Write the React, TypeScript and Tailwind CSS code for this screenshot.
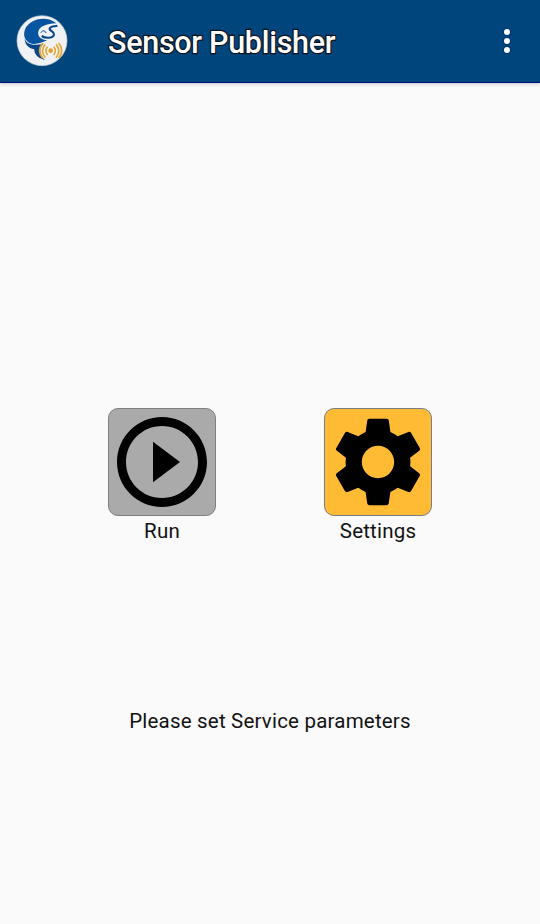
import React from "react";

function Logo() {
  return (
    <svg viewBox="0 0 192 192" className="ml-[10px] h-16 w-16 shrink-0">
      <circle cx="96" cy="95" r="75" fill="#f0f1f4" stroke="#c3ced9" strokeWidth="2" />
      <path d="M139 43C110 19 66 29 48 55C36 77 44 99 65 104C80 107 96 101 112 94C92 91 82 82 85 68C88 53 108 44 139 43Z" fill="#0754a0" />
      <path d="M44 88C48 106 67 112 101 104C86 117 87 137 105 153C80 147 72 133 73 121C54 118 44 105 44 88Z" fill="#06458b" />
      <path d="M142 50C134 53 118 51 119 60C120 67 133 67 132 77C130 88 107 89 95 81" fill="none" stroke="#06458b" strokeWidth="6.5" />
      <path d="M93 71C97 63 106 64 108 72" fill="none" stroke="#06458b" strokeWidth="3" />
      <circle cx="122" cy="125" r="7" fill="#e3a02b" />
      <g fill="none" stroke="#e5a735" strokeWidth="5">
        <path d="M113 113Q103 125 113 138M131 113Q141 125 131 138" />
        <path d="M106 106Q89 125 106 146M138 106Q155 125 138 146" />
        <path d="M98 102Q80 125 98 148M146 102Q164 125 146 148" />
      </g>
    </svg>
  );
}

function ActionButton({ label, color, children }: { label: string; color: string; children: React.ReactNode }) {
  return (
    <div className="flex w-[108px] flex-col items-center">
      <button className={`flex h-[108px] w-[108px] items-center justify-center rounded-[10px] border ${color}`}>
        <svg viewBox="0 0 24 24" className="h-[108px] w-[108px] shrink-0" fill="#000">
          {children}
        </svg>
      </button>
      <span className="mt-[3px] text-[20.5px] leading-6 tracking-[0.2px] whitespace-nowrap">{label}</span>
    </div>
  );
}

export default function App() {
  return (
    <div className="flex h-[924px] w-[540px] flex-col overflow-hidden bg-[#fafafa] font-['Roboto',sans-serif] text-[#121212]">
      <header className="flex h-[83px] shrink-0 items-center border-b border-[#00107a] bg-[#00467c] shadow-[0_1px_4px_rgba(0,0,0,0.22)]">
        <Logo />
        <h1 className="mt-1 ml-[34px] flex-1 text-[30.5px] leading-9 font-medium tracking-[-0.3px] whitespace-nowrap text-white [paint-order:stroke_fill] [-webkit-text-stroke:2.4px_#101018]">Sensor Publisher</h1>
        <button aria-label="More options" className="mr-[30px] flex flex-col gap-[3px]">
          <span className="h-1.5 w-1.5 rounded-full bg-white shadow-[0_0_0_1px_#00237080]" />
          <span className="h-1.5 w-1.5 rounded-full bg-white shadow-[0_0_0_1px_#00237080]" />
          <span className="h-1.5 w-1.5 rounded-full bg-white shadow-[0_0_0_1px_#00237080]" />
        </button>
      </header>
      <main className="flex flex-col items-center pt-[325px]">
        <div className="flex gap-[108px]">
          <ActionButton label="Run" color="border-[#808080] bg-[#aaaaaa]">
            <path d="M10 16.5l6-4.5-6-4.5v9zM12 2C6.48 2 2 6.48 2 12s4.48 10 10 10 10-4.48 10-10S17.52 2 12 2zm0 18c-4.41 0-8-3.59-8-8s3.59-8 8-8 8 3.59 8 8-3.59 8-8 8z" />
          </ActionButton>
          <ActionButton label="Settings" color="border-[#777d88] bg-[#ffbb33]">
            <path d="M19.14 12.94c.04-.3.06-.61.06-.94 0-.32-.02-.64-.07-.94l2.03-1.58c.18-.14.23-.41.12-.61l-1.92-3.32c-.12-.22-.37-.29-.59-.22l-2.39.96c-.5-.38-1.03-.7-1.62-.94l-.36-2.54c-.04-.24-.24-.41-.48-.41h-3.84c-.24 0-.43.17-.47.41l-.36 2.54c-.59.24-1.13.57-1.62.94l-2.39-.96c-.22-.08-.47 0-.59.22L2.74 8.87c-.12.21-.08.47.12.61l2.03 1.58c-.05.3-.09.63-.09.94s.02.64.07.94l-2.03 1.58c-.18.14-.23.41-.12.61l1.92 3.32c.12.22.37.29.59.22l2.39-.96c.5.38 1.03.7 1.62.94l.36 2.54c.05.24.24.41.48.41h3.84c.24 0 .44-.17.47-.41l.36-2.54c.59-.24 1.13-.56 1.62-.94l2.39.96c.22.08.47 0 .59-.22l1.92-3.32c.12-.22.07-.47-.12-.61l-2.01-1.58zM12 15.6c-1.98 0-3.6-1.62-3.6-3.6s1.62-3.6 3.6-3.6 3.6 1.62 3.6 3.6-1.62 3.6-3.6 3.6z" />
          </ActionButton>
        </div>
        <p className="mt-[166px] text-[20.5px] leading-6 tracking-[0.2px] whitespace-nowrap">Please set Service parameters</p>
      </main>
    </div>
  );
}
